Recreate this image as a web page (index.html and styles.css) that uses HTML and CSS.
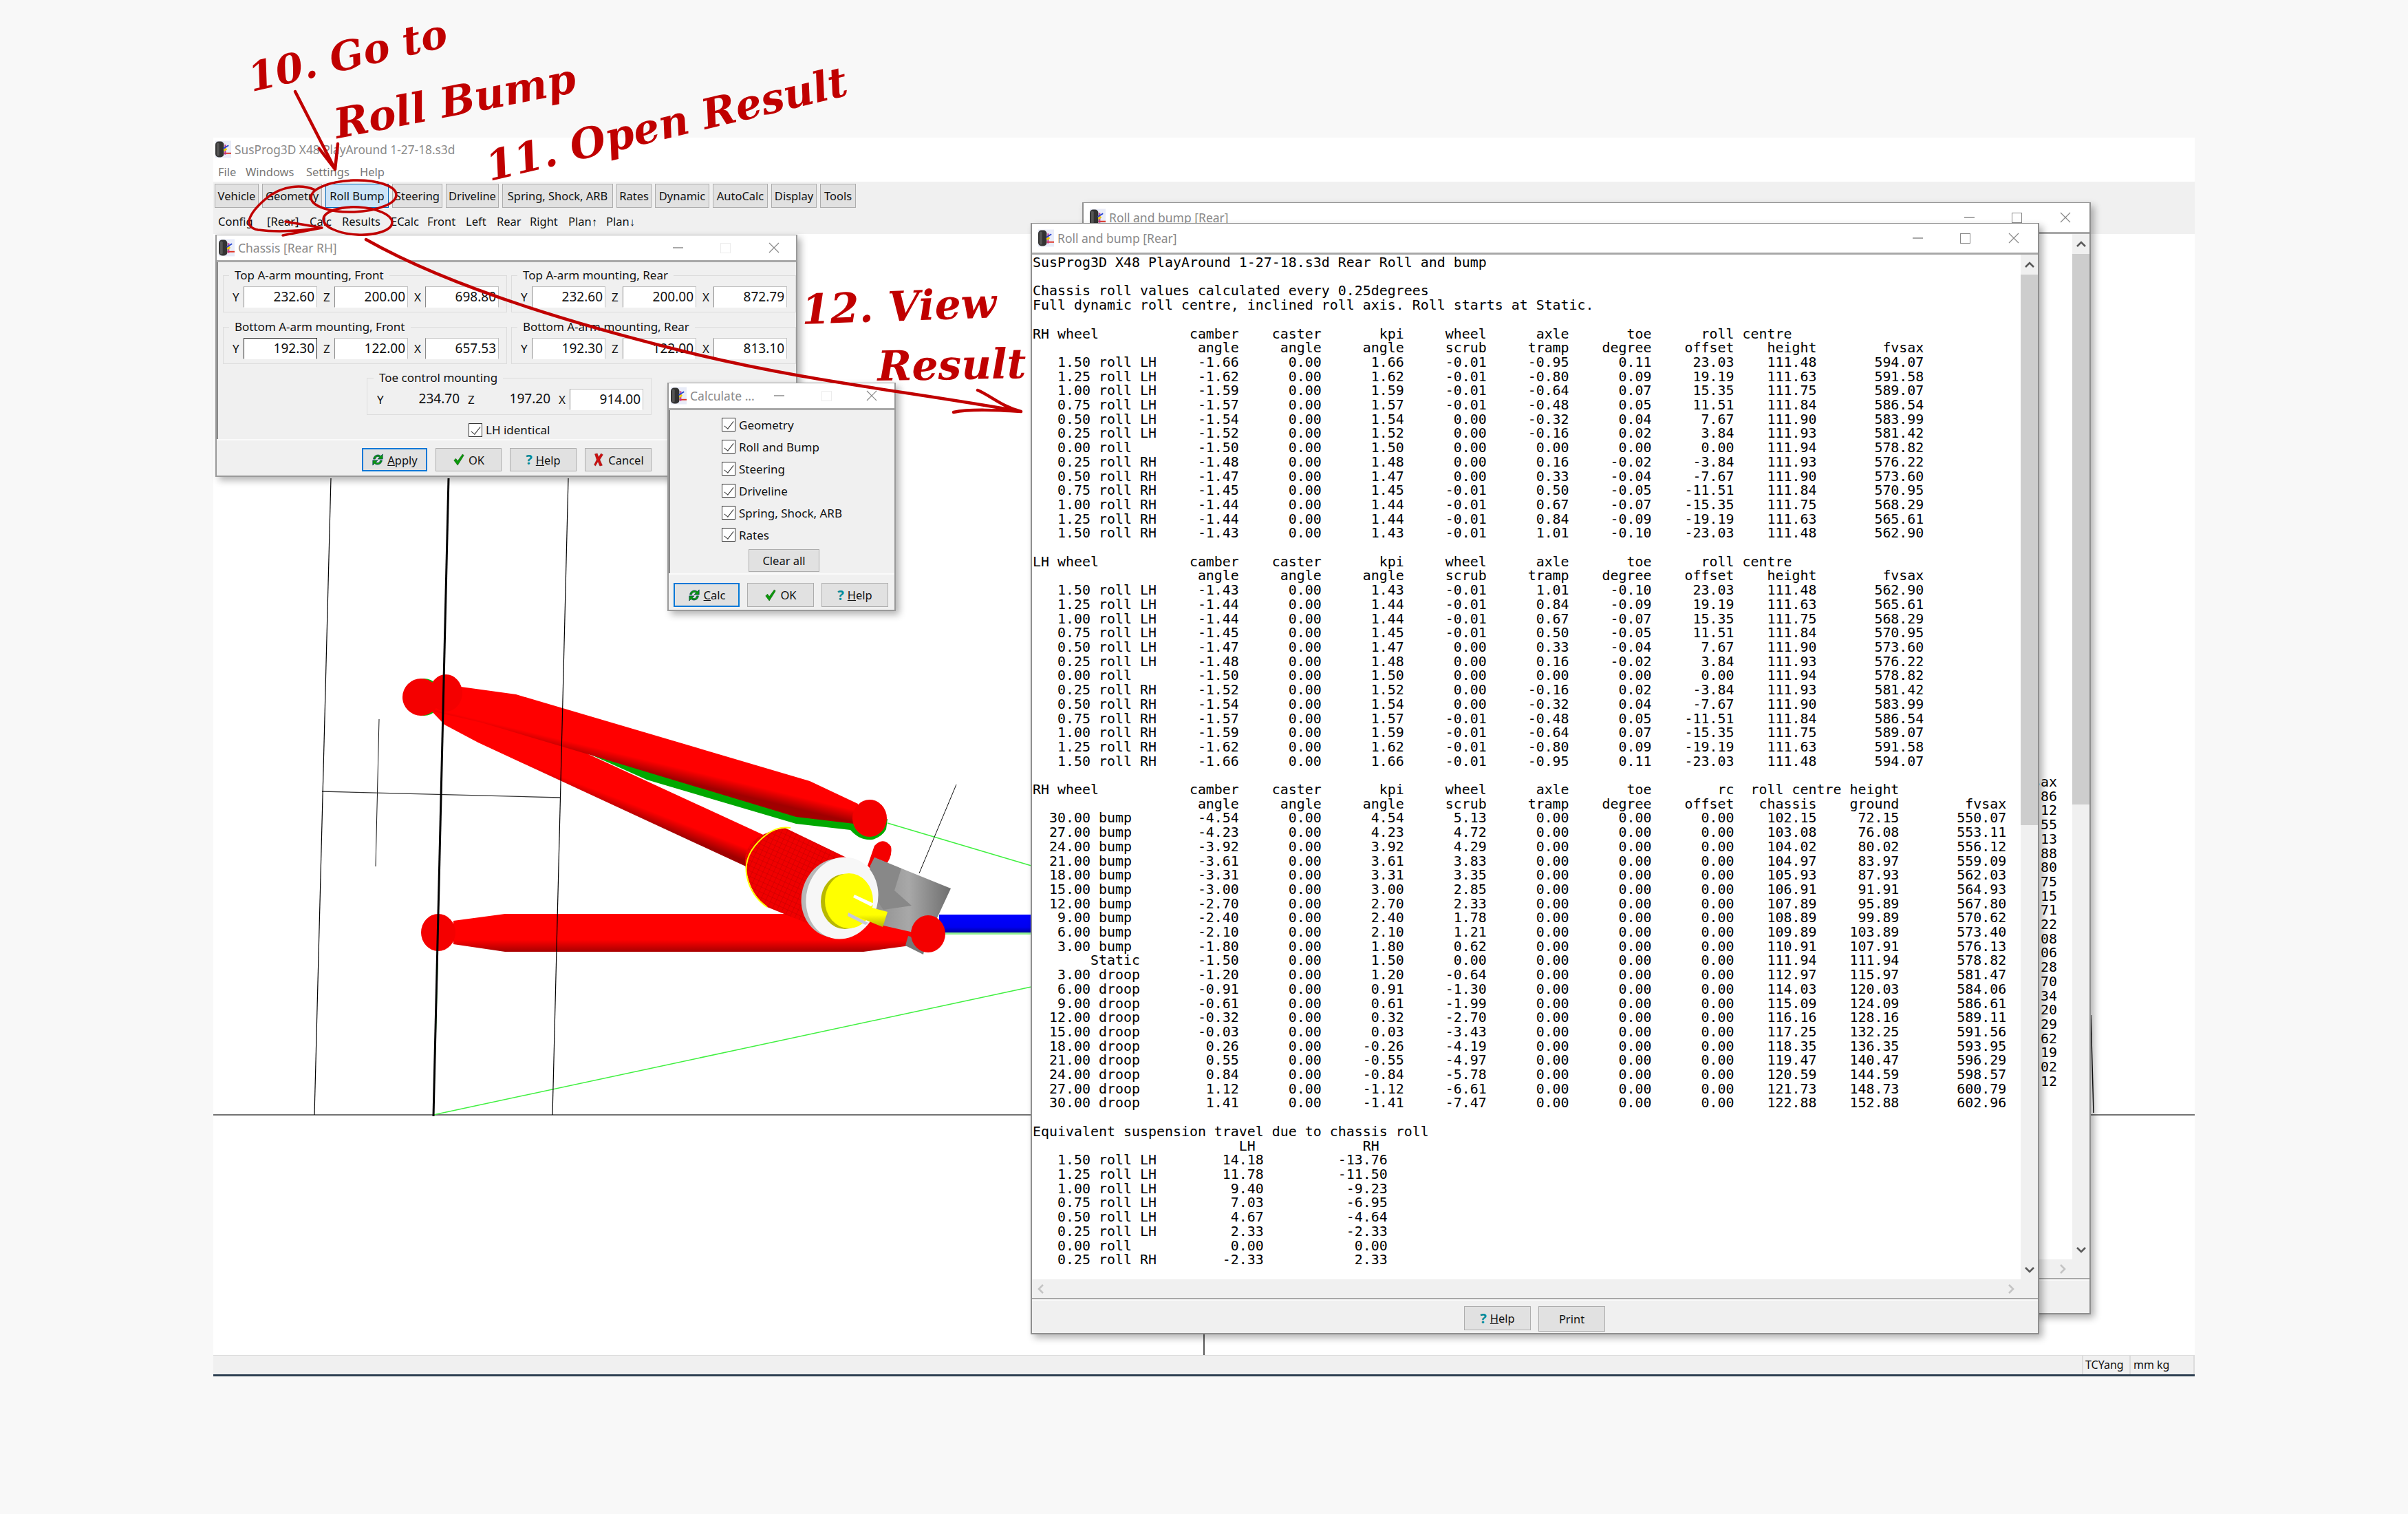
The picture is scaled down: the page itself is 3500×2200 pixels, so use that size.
FILE: index.html
```html
<!DOCTYPE html>
<html lang="en">
<head>
<meta charset="utf-8">
<title>SusProg3D tutorial</title>
<link rel="stylesheet" href="styles.css">
</head>
<body>
<svg class="defs" width="0" height="0" aria-hidden="true">
  <defs>
    <symbol id="app-ico" viewBox="0 0 24 26">
      <rect width="24" height="26" fill="#e9ecf8"/>
      <rect x="0" y="1" width="13" height="24" rx="5" fill="#333"/>
      <rect x="2" y="3" width="4" height="20" rx="2" fill="#555"/>
      <path d="M13 19H24" stroke="#e03020" stroke-width="2"/>
      <path d="M15 21V6" stroke="#c03090" stroke-width="2"/>
      <path d="M12 12L20 7" stroke="#2040d0" stroke-width="2"/>
      <path d="M13 15L17 12" stroke="#f0d000" stroke-width="3"/>
    </symbol>
    <symbol id="i-refresh" viewBox="0 0 20 22">
      <path d="M3 10C3 4 11 1 15 5L18 2V10H10L13 7C10 5 7 6 6 10Z" fill="#0a9a0a" stroke="#0a3a60" stroke-width=".8"/>
      <path d="M17 12C17 18 9 21 5 17L2 20V12H10L7 15C10 17 13 16 14 12Z" fill="#0a9a0a" stroke="#0a3a60" stroke-width=".8"/>
    </symbol>
    <symbol id="i-check" viewBox="0 0 20 20">
      <path d="M2 11L5 8L8 12L16 1L18 3L8 19Z" fill="#0a9a0a" stroke="#065006" stroke-width=".6"/>
    </symbol>
    <symbol id="i-cross" viewBox="0 0 16 22">
      <path d="M2 2L6 1L8 7L12 1L15 3L10 11L14 20L10 21L7 14L3 21L1 19L5 11Z" fill="#d01010" stroke="#700" stroke-width=".5"/>
    </symbol>
    <linearGradient id="g-up" gradientUnits="userSpaceOnUse" x1="950" y1="1068" x2="937" y2="1122">
      <stop offset="0" stop-color="#ff0000"/><stop offset=".68" stop-color="#ff0000"/><stop offset="1" stop-color="#a00000"/>
    </linearGradient>
    <linearGradient id="g-lo" gradientUnits="userSpaceOnUse" x1="900" y1="1115" x2="878" y2="1172">
      <stop offset="0" stop-color="#ff0000"/><stop offset=".7" stop-color="#ff0000"/><stop offset="1" stop-color="#a00000"/>
    </linearGradient>
    <linearGradient id="g-bot" gradientUnits="userSpaceOnUse" x1="0" y1="1328" x2="0" y2="1383">
      <stop offset="0" stop-color="#ff0000"/><stop offset=".68" stop-color="#ff0000"/><stop offset="1" stop-color="#a80000"/>
    </linearGradient>
    <linearGradient id="g-blue" x1="0" y1="0" x2="0" y2="1">
      <stop offset="0" stop-color="#0000ff"/><stop offset=".7" stop-color="#0000f0"/><stop offset="1" stop-color="#0000a0"/>
    </linearGradient>
    <linearGradient id="g-grey" x1="0" y1="0" x2="1" y2="0">
      <stop offset="0" stop-color="#8a8a8a"/><stop offset=".5" stop-color="#a8a8a8"/><stop offset="1" stop-color="#6e6e6e"/>
    </linearGradient>
    <linearGradient id="g-shaft" x1="0" y1="0" x2="0" y2="1">
      <stop offset="0" stop-color="#ffff00"/><stop offset=".6" stop-color="#ffff00"/><stop offset="1" stop-color="#b8b800"/>
    </linearGradient>
    <pattern id="mesh" width="7" height="7" patternUnits="userSpaceOnUse" patternTransform="rotate(25)">
      <path d="M0 0H7M0 0V7" stroke="#a00000" stroke-width=".8" opacity=".7"/>
    </pattern>
  </defs>
</svg>

<div class="app">
  <div class="app-title"><svg class="ico"><use href="#app-ico"/></svg><span>SusProg3D X48 PlayAround 1-27-18.s3d</span></div>
  <div class="app-menu"><span>File</span><span>Windows</span><span>Settings</span><span>Help</span></div>
  <div class="toolbars">
    <div class="tabs">
      <button class="tab t-vehicle">Vehicle</button>
      <button class="tab t-geometry">Geometry</button>
      <button class="tab t-roll active">Roll Bump</button>
      <button class="tab t-steering">Steering</button>
      <button class="tab t-driveline">Driveline</button>
      <button class="tab t-spring">Spring, Shock, ARB</button>
      <button class="tab t-rates">Rates</button>
      <button class="tab t-dynamic">Dynamic</button>
      <button class="tab t-autocalc">AutoCalc</button>
      <button class="tab t-display">Display</button>
      <button class="tab t-tools">Tools</button>
    </div>
    <div class="subnav">
      <span>Config</span><span>[Rear]</span><span>Calc</span><span>Results</span><span>ECalc</span><span>Front</span><span>Left</span><span>Rear</span><span>Right</span><span>Plan↑</span><span>Plan↓</span>
    </div>
  </div>
  <div class="canvas"></div>
  <div class="status">
    <span class="st-main"></span><span class="st-cell st-user">TCYang</span><span class="st-cell st-unit">mm kg</span>
  </div>
</div>

<svg class="scene" width="3500" height="2200" viewBox="0 0 3500 2200" aria-hidden="true">
  <path d="M310 1620H3190" stroke="#444" stroke-width="1.5"/>
  <path d="M1750 1900V1969" stroke="#222" stroke-width="1.5"/>
  <path d="M3039 1475L3043 1617" stroke="#111" stroke-width="1.5"/>
  <path d="M551 1045L546 1259" stroke="#111" stroke-width="1"/>
  <path d="M468 1150L814 1159" stroke="#333" stroke-width="1.3"/>
  <path d="M1290 1196L1499 1258M630 1620L1499 1434M636 1400L630 1620" stroke="#40f040" stroke-width="1.5" fill="none"/>

  <path d="M855 1095L940 1133L1157 1197L1236 1206Q1250 1222 1268 1220Q1282 1216 1288 1205L1290 1190L1157 1180Z" fill="#00a800"/>
  <ellipse cx="616" cy="1013" rx="26" ry="27" fill="#00c000"/>
  <path d="M627 1033L646 1053L695 1079L1082 1258L1130 1270L1135 1225L1105 1211L760 1052L640 1000Z" fill="url(#g-lo)"/>
  <path d="M648 985L670 998L750 1009L1177 1135L1247 1168L1250 1198L1157 1187L858 1097L700 1050L627 1033Z" fill="url(#g-up)"/>
  <ellipse cx="612" cy="1013" rx="27" ry="27" fill="#f40000"/>
  <ellipse cx="648" cy="1007" rx="24" ry="27" fill="#f40000"/>
  <ellipse cx="1264" cy="1189" rx="25" ry="27" fill="#f40000"/>

  <path d="M659 1338L734 1328H1150L1330 1345L1323 1374L1255 1383H734L659 1372Z" fill="url(#g-bot)"/>
  <ellipse cx="637" cy="1355" rx="25" ry="27" fill="#f40000"/>
  <rect x="1365" y="1329" width="134" height="26" fill="url(#g-blue)"/>
  <rect x="1365" y="1355" width="134" height="3" fill="#90f090"/>

  <path d="M1271 1229Q1284 1215 1295 1230Q1298 1245 1285 1260L1268 1265L1261 1258Z" fill="#f40000"/>
  <path d="M1316 1374L1342 1387L1346 1368L1320 1360Z" fill="#777"/>
  <path d="M1271 1246L1382 1291L1362 1334L1350 1360L1284 1345L1260 1300L1265 1258Z" fill="url(#g-grey)"/>
  <path d="M1265 1258L1271 1246L1310 1262L1300 1294L1325 1316L1284 1322L1262 1290Z" fill="#888"/>
  <path d="M1336 1269L1390 1140" stroke="#111" stroke-width="1"/>

  <path d="M1141 1203Q1075 1215 1084 1262Q1090 1300 1115 1318L1177 1343L1232 1247Z" fill="#f00000"/>
  <path d="M1141 1203Q1075 1215 1084 1262Q1090 1300 1115 1318L1177 1343L1232 1247Z" fill="url(#mesh)"/>
  <path d="M1149 1203Q1131 1200 1115 1212Q1078 1240 1086 1275Q1092 1302 1115 1318" fill="none" stroke="#ffff00" stroke-width="2"/>
  <ellipse cx="1217" cy="1305" rx="52" ry="58" fill="#b8b8b8" transform="rotate(15 1217 1305)"/>
  <ellipse cx="1224" cy="1305" rx="52" ry="60" fill="#f7f7f7" transform="rotate(15 1224 1305)"/>
  <ellipse cx="1228" cy="1310" rx="35" ry="40" fill="#b8b800"/>
  <ellipse cx="1234" cy="1309" rx="35" ry="40" fill="#ffff00"/>
  <path d="M1206 1303L1290 1325L1283 1347L1203 1314Z" fill="url(#g-shaft)"/>
  <path d="M1242 1300L1270 1313L1266 1317L1240 1304Z" fill="#fff"/>
  <path d="M1233 1326L1262 1341L1258 1344L1232 1331Z" fill="#c8c8d8"/>
  <ellipse cx="1349" cy="1357" rx="25" ry="27" fill="#f40000"/>

  <path d="M481 695L457 1620" stroke="#000" stroke-width="1.2"/>
  <path d="M652 695L630 1622" stroke="#000" stroke-width="3"/>
  <path d="M826 695L803 1620" stroke="#000" stroke-width="1.2"/>
</svg>

<section class="win win-back">
  <header class="win-head"><svg class="ico"><use href="#app-ico"/></svg><span class="win-name">Roll and bump [Rear]</span>
    <span class="ctl-min"></span><span class="ctl-max"></span><svg class="ctl-close" viewBox="0 0 16 16"><path d="M1 1L15 15M15 1L1 15"/></svg></header>
  <div class="win-main">
    <div class="text back-text"><pre>vsax
86
12
55
13
88
80
75
15
71
22
08
06
28
70
34
20
29
62
19
02
12</pre></div>
    <div class="vscroll"><div class="sb-btn"><svg viewBox="0 0 14 10"><path d="M1 8L7 2L13 8"/></svg></div><div class="sb-thumb"></div><div class="sb-track"><svg viewBox="0 0 14 10"><path d="M1 2L7 8L13 2"/></svg></div></div>
  </div>
  <div class="hscroll"><svg class="arr" viewBox="0 0 10 14"><path d="M8 1L2 7L8 13"/></svg><svg class="arr" viewBox="0 0 10 14"><path d="M2 1L8 7L2 13"/></svg></div>
  <div class="win-foot"></div>
</section>

<section class="win win-front">
  <header class="win-head"><svg class="ico"><use href="#app-ico"/></svg><span class="win-name">Roll and bump [Rear]</span>
    <span class="ctl-min"></span><span class="ctl-max"></span><svg class="ctl-close" viewBox="0 0 16 16"><path d="M1 1L15 15M15 1L1 15"/></svg></header>
  <div class="win-main">
    <div class="text"><pre>SusProg3D X48 PlayAround 1-27-18.s3d Rear Roll and bump

Chassis roll values calculated every 0.25degrees
Full dynamic roll centre, inclined roll axis. Roll starts at Static.

RH wheel           camber    caster       kpi     wheel      axle       toe      roll centre
                    angle     angle     angle     scrub     tramp    degree    offset    height        fvsax
   1.50 roll LH     -1.66      0.00      1.66     -0.01     -0.95      0.11     23.03    111.48       594.07
   1.25 roll LH     -1.62      0.00      1.62     -0.01     -0.80      0.09     19.19    111.63       591.58
   1.00 roll LH     -1.59      0.00      1.59     -0.01     -0.64      0.07     15.35    111.75       589.07
   0.75 roll LH     -1.57      0.00      1.57     -0.01     -0.48      0.05     11.51    111.84       586.54
   0.50 roll LH     -1.54      0.00      1.54      0.00     -0.32      0.04      7.67    111.90       583.99
   0.25 roll LH     -1.52      0.00      1.52      0.00     -0.16      0.02      3.84    111.93       581.42
   0.00 roll        -1.50      0.00      1.50      0.00      0.00      0.00      0.00    111.94       578.82
   0.25 roll RH     -1.48      0.00      1.48      0.00      0.16     -0.02     -3.84    111.93       576.22
   0.50 roll RH     -1.47      0.00      1.47      0.00      0.33     -0.04     -7.67    111.90       573.60
   0.75 roll RH     -1.45      0.00      1.45     -0.01      0.50     -0.05    -11.51    111.84       570.95
   1.00 roll RH     -1.44      0.00      1.44     -0.01      0.67     -0.07    -15.35    111.75       568.29
   1.25 roll RH     -1.44      0.00      1.44     -0.01      0.84     -0.09    -19.19    111.63       565.61
   1.50 roll RH     -1.43      0.00      1.43     -0.01      1.01     -0.10    -23.03    111.48       562.90

LH wheel           camber    caster       kpi     wheel      axle       toe      roll centre
                    angle     angle     angle     scrub     tramp    degree    offset    height        fvsax
   1.50 roll LH     -1.43      0.00      1.43     -0.01      1.01     -0.10     23.03    111.48       562.90
   1.25 roll LH     -1.44      0.00      1.44     -0.01      0.84     -0.09     19.19    111.63       565.61
   1.00 roll LH     -1.44      0.00      1.44     -0.01      0.67     -0.07     15.35    111.75       568.29
   0.75 roll LH     -1.45      0.00      1.45     -0.01      0.50     -0.05     11.51    111.84       570.95
   0.50 roll LH     -1.47      0.00      1.47      0.00      0.33     -0.04      7.67    111.90       573.60
   0.25 roll LH     -1.48      0.00      1.48      0.00      0.16     -0.02      3.84    111.93       576.22
   0.00 roll        -1.50      0.00      1.50      0.00      0.00      0.00      0.00    111.94       578.82
   0.25 roll RH     -1.52      0.00      1.52      0.00     -0.16      0.02     -3.84    111.93       581.42
   0.50 roll RH     -1.54      0.00      1.54      0.00     -0.32      0.04     -7.67    111.90       583.99
   0.75 roll RH     -1.57      0.00      1.57     -0.01     -0.48      0.05    -11.51    111.84       586.54
   1.00 roll RH     -1.59      0.00      1.59     -0.01     -0.64      0.07    -15.35    111.75       589.07
   1.25 roll RH     -1.62      0.00      1.62     -0.01     -0.80      0.09    -19.19    111.63       591.58
   1.50 roll RH     -1.66      0.00      1.66     -0.01     -0.95      0.11    -23.03    111.48       594.07

RH wheel           camber    caster       kpi     wheel      axle       toe        rc  roll centre height
                    angle     angle     angle     scrub     tramp    degree    offset   chassis    ground        fvsax
  30.00 bump        -4.54      0.00      4.54      5.13      0.00      0.00      0.00    102.15     72.15       550.07
  27.00 bump        -4.23      0.00      4.23      4.72      0.00      0.00      0.00    103.08     76.08       553.11
  24.00 bump        -3.92      0.00      3.92      4.29      0.00      0.00      0.00    104.02     80.02       556.12
  21.00 bump        -3.61      0.00      3.61      3.83      0.00      0.00      0.00    104.97     83.97       559.09
  18.00 bump        -3.31      0.00      3.31      3.35      0.00      0.00      0.00    105.93     87.93       562.03
  15.00 bump        -3.00      0.00      3.00      2.85      0.00      0.00      0.00    106.91     91.91       564.93
  12.00 bump        -2.70      0.00      2.70      2.33      0.00      0.00      0.00    107.89     95.89       567.80
   9.00 bump        -2.40      0.00      2.40      1.78      0.00      0.00      0.00    108.89     99.89       570.62
   6.00 bump        -2.10      0.00      2.10      1.21      0.00      0.00      0.00    109.89    103.89       573.40
   3.00 bump        -1.80      0.00      1.80      0.62      0.00      0.00      0.00    110.91    107.91       576.13
       Static       -1.50      0.00      1.50      0.00      0.00      0.00      0.00    111.94    111.94       578.82
   3.00 droop       -1.20      0.00      1.20     -0.64      0.00      0.00      0.00    112.97    115.97       581.47
   6.00 droop       -0.91      0.00      0.91     -1.30      0.00      0.00      0.00    114.03    120.03       584.06
   9.00 droop       -0.61      0.00      0.61     -1.99      0.00      0.00      0.00    115.09    124.09       586.61
  12.00 droop       -0.32      0.00      0.32     -2.70      0.00      0.00      0.00    116.16    128.16       589.11
  15.00 droop       -0.03      0.00      0.03     -3.43      0.00      0.00      0.00    117.25    132.25       591.56
  18.00 droop        0.26      0.00     -0.26     -4.19      0.00      0.00      0.00    118.35    136.35       593.95
  21.00 droop        0.55      0.00     -0.55     -4.97      0.00      0.00      0.00    119.47    140.47       596.29
  24.00 droop        0.84      0.00     -0.84     -5.78      0.00      0.00      0.00    120.59    144.59       598.57
  27.00 droop        1.12      0.00     -1.12     -6.61      0.00      0.00      0.00    121.73    148.73       600.79
  30.00 droop        1.41      0.00     -1.41     -7.47      0.00      0.00      0.00    122.88    152.88       602.96

Equivalent suspension travel due to chassis roll
                         LH             RH
   1.50 roll LH        14.18         -13.76
   1.25 roll LH        11.78         -11.50
   1.00 roll LH         9.40          -9.23
   0.75 roll LH         7.03          -6.95
   0.50 roll LH         4.67          -4.64
   0.25 roll LH         2.33          -2.33
   0.00 roll            0.00           0.00
   0.25 roll RH        -2.33           2.33</pre></div>
    <div class="vscroll"><div class="sb-btn"><svg viewBox="0 0 14 10"><path d="M1 8L7 2L13 8"/></svg></div><div class="sb-thumb"></div><div class="sb-track"><svg viewBox="0 0 14 10"><path d="M1 2L7 8L13 2"/></svg></div></div>
  </div>
  <div class="hscroll"><svg class="arr" viewBox="0 0 10 14"><path d="M8 1L2 7L8 13"/></svg><svg class="arr" viewBox="0 0 10 14"><path d="M2 1L8 7L2 13"/></svg></div>
  <div class="win-foot foot-front">
    <button class="btn b-help"><span class="q">?</span><span><u>H</u>elp</span></button>
    <button class="btn b-print">Print</button>
  </div>
</section>

<section class="dlg dlg-chassis">
  <header class="dlg-head"><svg class="ico"><use href="#app-ico"/></svg><span class="win-name">Chassis [Rear RH]</span>
    <span class="ctl-min"></span><span class="ctl-max faint"></span><svg class="ctl-close" viewBox="0 0 16 16"><path d="M1 1L15 15M15 1L1 15"/></svg></header>
  <div class="chassis-body">
    <div class="groups">
      <fieldset class="group"><legend>Top A-arm mounting, Front</legend>
        <span>Y</span><div class="field">232.60</div><span class="axis">Z</span><div class="field">200.00</div><span class="axis">X</span><div class="field">698.80</div></fieldset>
      <fieldset class="group"><legend>Top A-arm mounting, Rear</legend>
        <span>Y</span><div class="field">232.60</div><span class="axis">Z</span><div class="field">200.00</div><span class="axis">X</span><div class="field">872.79</div></fieldset>
      <fieldset class="group"><legend>Bottom A-arm mounting, Front</legend>
        <span>Y</span><div class="field focus">192.30</div><span class="axis">Z</span><div class="field">122.00</div><span class="axis">X</span><div class="field">657.53</div></fieldset>
      <fieldset class="group"><legend>Bottom A-arm mounting, Rear</legend>
        <span>Y</span><div class="field">192.30</div><span class="axis">Z</span><div class="field">122.00</div><span class="axis">X</span><div class="field">813.10</div></fieldset>
    </div>
    <fieldset class="group group-toe"><legend>Toe control mounting</legend>
      <span>Y</span><div class="value">234.70</div><span class="axis">Z</span><div class="value">197.20</div><span class="axis">X</span><div class="field">914.00</div></fieldset>
    <label class="check check-lh"><i class="box"></i>LH identical</label>
  </div>
  <div class="dlg-foot foot-chassis">
    <button class="btn b-apply default"><svg class="bi"><use href="#i-refresh"/></svg><span><u>A</u>pply</span></button>
    <button class="btn b-ok"><svg class="bi"><use href="#i-check"/></svg><span>OK</span></button>
    <button class="btn b-help2"><span class="q">?</span><span><u>H</u>elp</span></button>
    <button class="btn b-cancel"><svg class="bi"><use href="#i-cross"/></svg><span>Cancel</span></button>
  </div>
</section>

<section class="dlg dlg-calc">
  <header class="dlg-head"><svg class="ico"><use href="#app-ico"/></svg><span class="win-name">Calculate ...</span>
    <span class="ctl-min"></span><span class="ctl-max faint"></span><svg class="ctl-close" viewBox="0 0 16 16"><path d="M1 1L15 15M15 1L1 15"/></svg></header>
  <div class="calc-body">
    <label class="check"><i class="box"></i>Geometry</label>
    <label class="check"><i class="box"></i>Roll and Bump</label>
    <label class="check"><i class="box"></i>Steering</label>
    <label class="check"><i class="box"></i>Driveline</label>
    <label class="check"><i class="box"></i>Spring, Shock, ARB</label>
    <label class="check"><i class="box"></i>Rates</label>
    <button class="btn b-clear">Clear all</button>
  </div>
  <div class="dlg-foot foot-calc">
    <button class="btn b-calc default"><svg class="bi"><use href="#i-refresh"/></svg><span><u>C</u>alc</span></button>
    <button class="btn b-ok2"><svg class="bi"><use href="#i-check"/></svg><span>OK</span></button>
    <button class="btn b-help3"><span class="q">?</span><span><u>H</u>elp</span></button>
  </div>
</section>

<svg class="ink" width="3500" height="2200" viewBox="0 0 3500 2200" aria-hidden="true">
  <path d="M429 133L487 246M464 216L487 246L491 209"/>
  <ellipse class="ring" cx="514" cy="285" rx="62" ry="23" transform="rotate(-2 514 285)"/>
  <ellipse class="ring" cx="520" cy="321" rx="50" ry="20" transform="rotate(3 520 321)"/>
  <path class="ring" d="M458 276C440 268 410 268 385 290C362 310 352 330 375 334C405 338 440 335 468 331M415 322L468 331L411 342"/>
  <path d="M532 348C650 415 830 470 1000 512S1330 570 1484 598M1421 567C1440 575 1455 590 1484 598C1450 596 1410 594 1386 599"/>
</svg>
<span class="note n-10">10. Go to</span>
<span class="note n-roll">Roll Bump</span>
<span class="note n-11">11. Open Result</span>
<span class="note n-12">12. View</span>
<span class="note n-res">Result</span>
</body>
</html>
```
FILE: styles.css
```css
* { box-sizing: border-box; }
html, body { margin: 0; padding: 0; }
body {
  position: relative;
  width: 3500px;
  height: 2200px;
  overflow: hidden;
  background: #f8f8f8;
  font-family: "Noto Sans", "Open Sans", sans-serif;
  font-size: 17px;
  color: #111;
}
.defs { position: absolute; }
button { font: inherit; color: inherit; padding: 0; }

/* main application window */
.app {
  position: absolute;
  left: 310px;
  top: 200px;
  width: 2880px;
  height: 1800px;
  display: flex;
  flex-direction: column;
  background: #fff;
}
.app-title {
  height: 34px;
  display: flex;
  align-items: center;
  gap: 5px;
  padding-left: 3px;
  color: #8a8a8a;
  font-size: 17.3px;
}
.ico { width: 23px; height: 26px; flex: none; }
.app-menu {
  height: 30px;
  display: grid;
  grid-template-columns: 40px 88px 78px auto;
  justify-content: start;
  align-items: center;
  padding-left: 7px;
  color: #777;
  font-size: 16.5px;
}
.toolbars { height: 76px; background: #f0f0f0; padding: 3px 0 0 2px; }
.tabs { display: flex; gap: 5px; height: 35px; }
.tab {
  height: 35px;
  background: #e1e1e1;
  border: 1px solid #adadad;
  font-size: 16.5px;
  white-space: nowrap;
  text-align: center;
}
.tab.active { background: #cce4f7; border-color: #0068b8; }
.t-vehicle { width: 64px; }
.t-geometry { width: 87px; }
.t-roll { width: 92px; }
.t-steering { width: 73px; }
.t-driveline { width: 77px; }
.t-spring { width: 161px; }
.t-rates { width: 51px; }
.t-dynamic { width: 79px; }
.t-autocalc { width: 80px; }
.t-display { width: 66px; }
.t-tools { width: 52px; }
.subnav {
  display: grid;
  grid-template-columns: 71px 62px 47px 71px 53px 56px 45px 48px 56px 55px auto;
  justify-content: start;
  align-items: center;
  height: 38px;
  padding-left: 5px;
  font-size: 16.5px;
}
.canvas { flex: 1; background: #fff; }
.status {
  height: 31px;
  display: flex;
  background: #f0f0f0;
  border-top: 1px solid #dcdcdc;
  border-bottom: 3px solid #2c3e50;
  font-size: 16px;
  line-height: 27px;
}
.st-main { flex: 1; }
.st-cell { border-left: 2px solid #dcdcdc; padding-left: 3px; }
.st-user { width: 69px; }
.st-unit { width: 95px; padding-left: 4px; border-right: 2px solid #dcdcdc; }

/* 3D view and annotations */
.scene { position: absolute; left: 0; top: 0; }
.ink { position: absolute; left: 0; top: 0; z-index: 5; fill: none; stroke: #c00000; stroke-width: 4.5; stroke-linecap: round; stroke-linejoin: round; }
.ink .ring { stroke-width: 3.5; }
.note {
  position: absolute;
  z-index: 6;
  font-family: "DejaVu Serif", "Liberation Serif", serif;
  font-weight: 700;
  font-style: italic;
  color: #c00000;
  white-space: nowrap;
  line-height: 1;
  transform-origin: left bottom;
}
.n-10 { left: 368px; top: 84px; font-size: 58px; transform: rotate(-13deg); }
.n-roll { left: 492px; top: 150px; font-size: 60px; transform: rotate(-11deg); }
.n-11 { left: 714px; top: 212px; font-size: 60px; transform: rotate(-13.5deg); }
.n-12 { left: 1166px; top: 420px; font-size: 60px; transform: rotate(-2deg); }
.n-res { left: 1276px; top: 502px; font-size: 60px; transform: rotate(-1deg); }

/* result windows */
.win {
  position: absolute;
  display: flex;
  flex-direction: column;
  background: #f0f0f0;
  border: 2px solid #8f8f8f;
  border-top: 1px solid #8f8f8f;
  box-shadow: 5px 5px 10px rgba(0, 0, 0, .3);
}
.win-back { left: 1573px; top: 294px; width: 1466px; height: 1616px; z-index: 1; }
.win-front { left: 1498px; top: 324px; width: 1466px; height: 1615px; z-index: 2; }
.win-head, .dlg-head {
  display: flex;
  align-items: center;
  flex: none;
  background: #fff;
  border-bottom: 3px solid #a8a8a8;
  color: #8a8a8a;
}
.win-head { height: 45px; padding-left: 9px; }
.win-name { margin-left: 5px; font-size: 17.5px; flex: 1; white-space: nowrap; }
.ctl-min { width: 15px; height: 2px; background: #a8a8a8; flex: none; }
.ctl-max { width: 15px; height: 15px; border: 1.5px solid #888; flex: none; margin-left: 54px; }
.ctl-max.faint { border-color: #ececec; }
.ctl-close { width: 16px; height: 16px; flex: none; margin: 0 27px 0 55px; fill: none; stroke: #888; stroke-width: 1.2; }
.win-main { flex: 1; display: flex; min-height: 0; }
.text { flex: 1; background: #fff; overflow: hidden; }
.text pre {
  margin: 0;
  padding: 2px 0 0 1px;
  font-family: "DejaVu Sans Mono", "Liberation Mono", monospace;
  font-size: 19.93px;
  line-height: 20.7px;
  color: #000;
}
.back-text { display: flex; justify-content: flex-end; }
.back-text pre { padding: 787px 22px 0 0; text-align: right; }
.vscroll { width: 25px; display: flex; flex-direction: column; background: #f0f0f0; flex: none; }
.vscroll svg { width: 14px; height: 10px; fill: none; stroke: #5a5a5a; stroke-width: 2.6; }
.sb-btn { height: 29px; flex: none; display: flex; align-items: center; justify-content: center; }
.sb-thumb { height: 800px; flex: none; background: #cdcdcd; }
.sb-track { flex: 1; display: flex; align-items: flex-end; justify-content: center; padding-bottom: 9px; }
.hscroll {
  height: 29px;
  flex: none;
  display: flex;
  align-items: center;
  justify-content: space-between;
  padding: 0 34px 0 8px;
  border-bottom: 2px solid #a8a8a8;
  background: #f0f0f0;
}
.arr { width: 10px; height: 14px; fill: none; stroke: #c4c4c4; stroke-width: 2.6; }
.win-foot { flex: none; height: 49px; background: #f0f0f0; border-top: 2px solid #fafafa; }
.foot-front { display: flex; gap: 11px; padding: 8px 0 0 628px; align-items: flex-start; }

/* buttons */
.btn {
  display: flex;
  align-items: center;
  justify-content: center;
  gap: 5px;
  background: #e1e1e1;
  border: 1px solid #adadad;
  font-size: 16.5px;
  flex: none;
}
.btn.default { border: 2px solid #0078d7; }
.q { color: #008b9a; font-weight: 700; font-size: 20px; line-height: 1; }
.bi { width: 18px; height: 20px; flex: none; }
.b-help { width: 97px; height: 35px; }
.b-print { width: 97px; height: 37px; }
.b-apply { width: 95px; height: 34px; }
.b-ok { width: 96px; height: 34px; }
.b-help2 { width: 97px; height: 34px; }
.b-cancel { width: 97px; height: 34px; }
.b-calc { width: 96px; height: 35px; }
.b-ok2, .b-help3 { width: 97px; height: 35px; }
.b-clear { width: 103px; height: 33px; margin: 5px 0 0 39px; }

/* dialogs */
.dlg {
  position: absolute;
  display: flex;
  flex-direction: column;
  background: #f0f0f0;
  border: 2px solid #9a9a9a;
  border-top: 1px solid #9a9a9a;
  box-shadow: 5px 5px 10px rgba(0, 0, 0, .3);
}
.dlg-chassis { left: 313px; top: 341px; width: 846px; height: 352px; z-index: 3; }
.dlg-calc { left: 970px; top: 556px; width: 332px; height: 332px; z-index: 4; }
.dlg-head { height: 39px; padding-left: 3px; }
.dlg-chassis .ctl-max { margin-left: 54px; }
.dlg-chassis .ctl-close { margin-right: 24px; }
.dlg-calc .ctl-min { margin-left: 0; }
.dlg-calc .ctl-max { margin-left: 54px; }
.dlg-calc .ctl-close { margin: 0 25px 0 50px; }
.chassis-body {
  flex: 1;
  padding: 8px 0 0 7px;
  display: flex;
  flex-direction: column;
  border-left: 2px solid #888;
}
.groups { display: grid; grid-template-columns: 413px 414px; column-gap: 6px; row-gap: 10px; }
.group {
  margin: 0;
  padding: 5px 0 6px 13px;
  min-width: 0;
  border: 1px solid #dcdcdc;
  display: grid;
  grid-template-columns: 16px 107px 25px 107px 25px 107px;
  align-items: center;
  font-size: 17px;
}
.axis { padding-left: 9px; }
.group legend { padding: 0 8px; margin-left: -5px; line-height: 22px; font-size: 17px; white-space: nowrap; }
.group-toe { width: 414px; margin: 9px 0 0 209px; padding-left: 14px; }
.field, .value {
  height: 31px;
  line-height: 29px;
  text-align: right;
  padding-right: 3px;
  font-size: 19px;
}
.field { background: #fff; border: 1px solid #c2c2c2; border-left-color: #8a8a8a; border-bottom-color: #fff; }
.field.focus { border-color: #222 #222 #fff #222; }
.check { display: flex; align-items: center; gap: 5px; font-size: 17px; white-space: nowrap; }
.check-lh { margin: 10px 0 0 357px; }
.box {
  position: relative;
  width: 20px;
  height: 20px;
  background: #fff;
  border: 1px solid #333;
  flex: none;
}
.box::after {
  content: "";
  position: absolute;
  left: 6px;
  top: 1px;
  width: 6px;
  height: 13px;
  border: solid #333;
  border-width: 0 1.5px 1.5px 0;
  transform: rotate(38deg);
}
.dlg-foot { flex: none; border-top: 2px solid #fafafa; }
.foot-chassis { height: 53px; display: flex; gap: 12px; padding: 11px 0 0 211px; }
.calc-body {
  flex: 1;
  padding: 5px 0 0 75px;
  display: grid;
  grid-auto-rows: 32px;
  border-left: 2px solid #888;
}
.b-clear { align-self: start; }
.foot-calc { height: 53px; display: flex; gap: 11px; padding: 12px 0 0 7px; }
```
